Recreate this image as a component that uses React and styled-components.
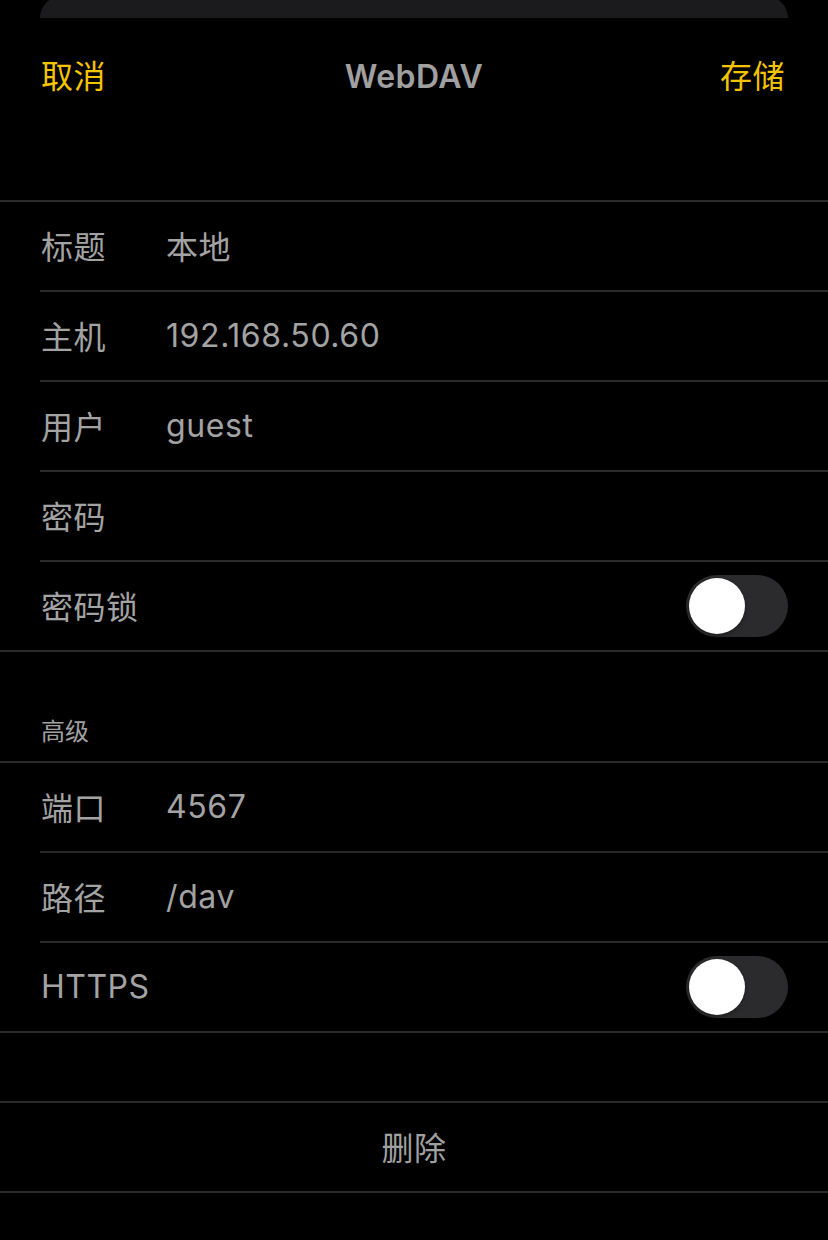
import styled, { createGlobalStyle } from 'styled-components'

const GlobalStyles = createGlobalStyle`
	html, body {
		margin: 0;
		padding: 0;
		background: #000;
	}
	body {
		font-family: Inter, "Noto Sans CJK SC", sans-serif;
		color: #a2a2a2;
	}
`

const Screen = styled.div`
	width: 828px;
	height: 1240px;
	background: #000;
	overflow: hidden;
`

const SheetEdge = styled.div`
	margin: -4px 40px 0;
	height: 22px;
	background: #1b1b1d;
	border-top-left-radius: 22px;
	border-top-right-radius: 22px;
`

const NavBar = styled.div`
	display: flex;
	align-items: center;
	justify-content: space-between;
	padding: 3px 43px 0 41px;
	height: 114px;
	box-sizing: border-box;
	position: relative;
`

const NavButton = styled.span`
	font-size: 32px;
	letter-spacing: 0.5px;
	color: #f5c400;
	line-height: 1;
`

const Title = styled.span`
	position: absolute;
	left: 50%;
	transform: translateX(-50%);
	font-size: 32px;
	font-weight: 600;
	color: #a0a0a0;
	letter-spacing: 0.4px;
`

const Group = styled.div`
	border-top: 2px solid #2a2a2c;
	border-bottom: 2px solid #2a2a2c;
	margin-top: ${p => p.$gap || 0}px;
`

const Row = styled.div`
	display: flex;
	align-items: center;
	height: 88px;
	box-sizing: border-box;
	padding: 0 40px 2px 0;
	margin-left: 40px;
	& + & {
		border-top: 2px solid #2a2a2c;
		height: 90px;
	}
`

const Label = styled.span`
	font-size: 32px;
	letter-spacing: 0.5px;
	color: #a3a3a3;
	width: 125px;
	padding-left: 1px;
	flex-shrink: 0;
`

const Value = styled.span`
	font-size: 32px;
	letter-spacing: 0.6px;
	color: #a3a3a3;
	flex: 1;
`

const Toggle = styled.div`
	width: 102px;
	height: 62px;
	border-radius: 31px;
	background: #2b2b2e;
	display: flex;
	align-items: center;
	padding: 0 3px;
	box-sizing: border-box;
	margin: 2px 0 0 auto;
`

const Knob = styled.div`
	width: 56px;
	height: 56px;
	border-radius: 50%;
	background: #fff;
	box-shadow: 0 2px 4px rgba(0, 0, 0, 0.3);
`

const SectionHeader = styled.div`
	font-size: 24px;
	color: #a0a0a0;
	padding: 0 0 17px 41px;
	margin-top: 68px;
	line-height: 1;
`

const DeleteButton = styled.div`
	height: 88px;
	display: flex;
	align-items: center;
	justify-content: center;
	padding-bottom: 2px;
	box-sizing: border-box;
	font-size: 32px;
	letter-spacing: 0.5px;
	color: #a0a0a0;
`

const fields = [
	['标题', '本地'],
	['主机', '192.168.50.60'],
	['用户', 'guest'],
	['密码', ''],
]

const advanced = [
	['端口', '4567'],
	['路径', '/dav'],
]

const App = () => {
	return (
		<Screen>
			<GlobalStyles />
			<SheetEdge />
			<NavBar>
				<NavButton>取消</NavButton>
				<Title>WebDAV</Title>
				<NavButton>存储</NavButton>
			</NavBar>
			<Group $gap={68}>
				{fields.map(([label, value]) => (
					<Row key={label}>
						<Label>{label}</Label>
						<Value>{value}</Value>
					</Row>
				))}
				<Row>
					<Label>密码锁</Label>
					<Toggle>
						<Knob />
					</Toggle>
				</Row>
			</Group>
			<SectionHeader>高级</SectionHeader>
			<Group>
				{advanced.map(([label, value]) => (
					<Row key={label}>
						<Label>{label}</Label>
						<Value>{value}</Value>
					</Row>
				))}
				<Row>
					<Label>HTTPS</Label>
					<Toggle>
						<Knob />
					</Toggle>
				</Row>
			</Group>
			<Group $gap={68}>
				<DeleteButton>删除</DeleteButton>
			</Group>
		</Screen>
	)
}

export default App
